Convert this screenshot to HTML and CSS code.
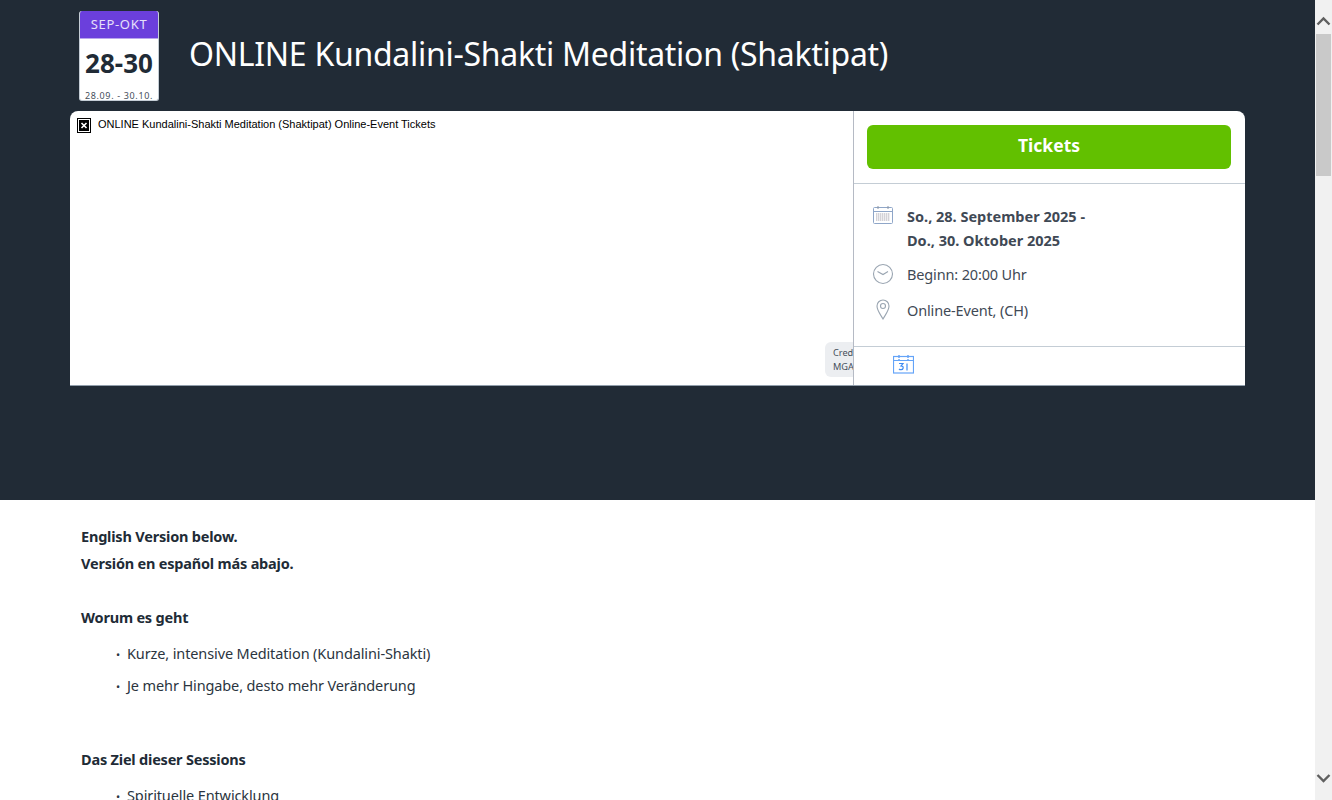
FILE: index.html
```html
<!DOCTYPE html>
<html lang="de">
<head>
    <meta charset="UTF-8">
    <meta name="viewport" content="width=device-width, initial-scale=1.0">
    <title>ONLINE Kundalini-Shakti Meditation (Shaktipat)</title>
    <link rel="stylesheet" href="styles.css">
</head>
<body>
    <div class="window">
        <div class="page">
            <header class="hero">
                <div class="hero-top">
                    <div class="date-badge">
                        <div class="date-month">SEP-OKT</div>
                        <div class="date-days">28-30</div>
                        <div class="date-range">28.09. - 30.10.</div>
                    </div>
                    <h1 class="event-title">ONLINE Kundalini-Shakti Meditation (Shaktipat)</h1>
                </div>
                <div class="event-card">
                    <div class="event-image">
                        <div class="broken-image">
                            <svg class="broken-icon" width="14" height="15" viewBox="0 0 14 15">
                                <rect x="0.5" y="0.5" width="13" height="14" fill="#fff" stroke="#000"/>
                                <rect x="2" y="2" width="10" height="11" fill="#000"/>
                                <path d="M4.5 5l5 5M9.5 5l-5 5" stroke="#fff" stroke-width="1.6"/>
                            </svg>
                            <span>ONLINE Kundalini-Shakti Meditation (Shaktipat) Online-Event Tickets</span>
                        </div>
                        <div class="credit">Cred<br>MGA</div>
                    </div>
                    <aside class="event-side">
                        <div class="ticket-box">
                            <a class="ticket-btn">Tickets</a>
                        </div>
                        <div class="event-info">
                            <div class="info-row info-date">
                                <svg class="info-icon" width="22" height="20" viewBox="0 0 22 20" fill="none">
                                    <rect x="1.5" y="2.5" width="19" height="16" rx="1" stroke="#8fa6c8"/>
                                    <path d="M1.5 6.5h19" stroke="#8fa6c8"/>
                                    <path d="M6 1v3M16 1v3" stroke="#8a94a3"/>
                                    <path d="M4 9h14M4 11h14M4 13h14M4 15h14" stroke="#a9a6b0" stroke-dasharray="1.4 .6"/>
                                </svg>
                                <div class="info-text"><strong>So., 28. September 2025 -<br>Do., 30. Oktober 2025</strong></div>
                            </div>
                            <div class="info-row info-time">
                                <svg class="info-icon" width="22" height="22" viewBox="0 0 22 22" fill="none">
                                    <circle cx="11" cy="11" r="9.5" stroke="#9aa5b1" stroke-width="1.1"/>
                                    <path d="M5.5 8.5l5.5 3 5-3" stroke="#9aa5b1" stroke-width="1.1"/>
                                </svg>
                                <div class="info-text">Beginn: 20:00 Uhr</div>
                            </div>
                            <div class="info-row info-place">
                                <svg class="info-icon pin" width="14" height="21" viewBox="0 0 14 21" fill="none">
                                    <path d="M7 20C4.5 15.5 1 11.5 1 7a6 6 0 0 1 12 0c0 4.500-3.500 8.500-6 13z" stroke="#9aa5b1" stroke-width="1.1"/>
                                    <circle cx="7" cy="7" r="2.500" stroke="#9aa5b1" stroke-width="1.1"/>
                                </svg>
                                <div class="info-text">Online-Event, (CH)</div>
                            </div>
                        </div>
                        <div class="side-actions">
                            <svg width="21" height="20" viewBox="0 0 21 20" fill="none">
                                <path d="M6 1v5M15 1v5" stroke="#4a90f2" stroke-width="1.2" stroke-dasharray="3 1"/>
                                <rect x="0.500" y="2.500" width="20" height="16.500" stroke="#64a4f8" stroke-width="1.2"/>
                                <path d="M0.500 6.500h20" stroke="#64a4f8"/>
                                <path d="M6 9.500h4l-2 2.500c2 0 2.500 1 2 2.500-.5 1.500-3 1.500-4 .5M14 9.500v7" stroke="#3f8cf2" stroke-width="1.2"/>
                            </svg>
                        </div>
                    </aside>
                </div>
            </header>
            <main class="description">
                <p class="line-bold">English Version below.</p>
                <p class="line-bold">Versión en español más abajo.</p>
                <h2 class="section-head first">Worum es geht</h2>
                <ul class="bullets">
                    <li>Kurze, intensive Meditation (Kundalini-Shakti)</li>
                    <li>Je mehr Hingabe, desto mehr Veränderung</li>
                </ul>
                <h2 class="section-head">Das Ziel dieser Sessions</h2>
                <ul class="bullets">
                    <li>Spirituelle Entwicklung</li>
                </ul>
            </main>
        </div>
        <div class="scrollbar">
            <svg class="arrow" width="17" height="34" viewBox="0 0 17 34" fill="none">
                <path d="M2.500 24.500l6-6 6 6" stroke="#5f5f5f" stroke-width="2.400"/>
            </svg>
            <div class="thumb"></div>
            <div class="track"></div>
            <svg class="arrow" width="17" height="34" viewBox="0 0 17 34" fill="none">
                <path d="M2.500 9l6 6 6-6" stroke="#5f5f5f" stroke-width="2.400"/>
            </svg>
        </div>
    </div>
</body>
</html>
```

FILE: styles.css
```css
* {
    box-sizing: border-box;
}
html, body {
    margin: 0;
    height: 100%;
    overflow: hidden;
}
body {
    font-family: "Noto Sans", Arial, sans-serif;
    color: #212b36;
    background: #fff;
}
.window {
    display: flex;
    height: 800px;
}
.page {
    flex: 1;
    min-width: 0;
    overflow: hidden;
}
.hero {
    height: 500px;
    background: #212b36;
    padding: 11px 70px 0;
}
.hero-top {
    display: flex;
    align-items: center;
    height: 90px;
    margin-left: 9px;
    margin-bottom: 10px;
}
.date-badge {
    width: 80px;
    height: 90px;
    background: #fff;
    border-radius: 3px;
    overflow: hidden;
    text-align: center;
    border: 1px solid #c4cdd5;
    border-top: 0;
}
.date-month {
    height: 28px;
    margin: 0 -1px;
    background: #6b3fdc;
    border-bottom: 1px solid #b9a5ec;
    color: #e6e0fa;
    font-size: 13px;
    line-height: 27px;
    letter-spacing: 0.7px;
}
.date-days {
    height: 50px;
    font-size: 26px;
    font-weight: 700;
    line-height: 49px;
}
.date-range {
    font-size: 9px;
    line-height: 13px;
    letter-spacing: 0.65px;
    color: #454f5b;
}
.event-title {
    margin: 0 0 6px 30px;
    font-size: 32px;
    font-weight: 400;
    letter-spacing: -0.28px;
    color: #fff;
    white-space: nowrap;
}
.event-card {
    display: flex;
    height: 275px;
    width: 1175px;
    background: #fff;
    border-radius: 8px 8px 0 0;
    border-bottom: 1px solid #919eab;
    overflow: hidden;
}
.event-image {
    position: relative;
    width: 783px;
    overflow: hidden;
}
.broken-image {
    display: flex;
    align-items: flex-start;
    padding: 7px 0 0 7px;
    font-family: "Liberation Sans", Arial, sans-serif;
    font-size: 11px;
    line-height: 13px;
    color: #000;
}
.broken-icon {
    margin-right: 7px;
    flex: none;
}
.credit {
    position: absolute;
    left: 755px;
    top: 231px;
    width: 28px;
    height: 35px;
    padding: 4px 0 0 8px;
    background: #eceef1;
    border-radius: 6px 0 0 6px;
    font-size: 9.200px;
    line-height: 14px;
    color: #454f5b;
    white-space: nowrap;
}
.event-side {
    flex: 1;
    border-left: 1px solid #b5bac4;
    display: flex;
    flex-direction: column;
}
.ticket-box {
    padding: 14px 14px 14px 13px;
    border-bottom: 1px solid #c4cdd5;
}
.ticket-btn {
    display: block;
    height: 44px;
    background: #62c000;
    border-radius: 6px;
    color: #fff;
    font-size: 17.500px;
    font-weight: 700;
    line-height: 41px;
    text-align: center;
}
.event-info {
    flex: 1;
    padding: 20px 0 0 18px;
    font-size: 14.500px;
    line-height: 24px;
    color: #454f5b;
    border-bottom: 1px solid #c4cdd5;
}
.info-row {
    display: flex;
    margin-bottom: 12px;
}
.info-row > svg {
    margin-top: 1px;
}
.info-icon {
    flex: none;
    margin-right: 13px;
}
.info-icon.pin {
    margin: 1px 17px 0 4px;
}
.info-text {
    color: #3f4955;
    letter-spacing: -0.15px;
}
.info-date .info-text {
    letter-spacing: 0;
}
.info-date {
    margin-bottom: 10px;
}
.side-actions {
    height: 38px;
    padding: 7px 0 0 39px;
}
.description {
    padding: 23px 81px 0;
    font-size: 14.500px;
    line-height: 27px;
}
.line-bold {
    margin: 0;
    font-weight: 700;
    letter-spacing: -0.2px;
}
.section-head {
    margin: 0;
    font-size: 14.500px;
    font-weight: 700;
    line-height: 27px;
    letter-spacing: -0.2px;
    padding-top: 44px;
}
.section-head.first {
    padding-top: 27px;
}
.bullets {
    margin: 7px 0 0;
    padding: 0 0 0 46px;
    line-height: 31px;
    list-style: none;
    color: #2b3540;
    letter-spacing: -0.12px;
}
.bullets li::before {
    content: "•";
    display: inline-block;
    width: 11px;
    margin-left: -11px;
    font-size: 11px;
}
.scrollbar {
    width: 17px;
    flex: none;
    background: #f1f1f1;
    display: flex;
    flex-direction: column;
    align-items: center;
}
.arrow {
    flex: none;
}
.thumb {
    width: 15px;
    height: 142px;
    background: #c9c9c9;
}
.track {
    flex: 1;
}
```
